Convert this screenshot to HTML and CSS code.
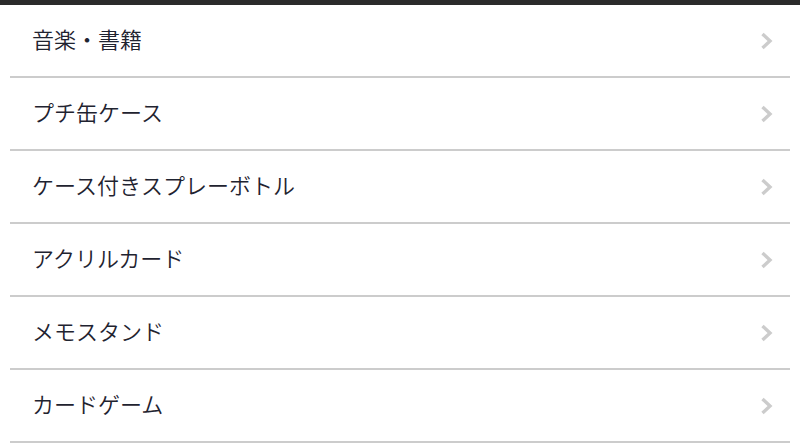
FILE: index.html
```html
<!DOCTYPE html>
<html lang="ja">
<head>
<meta charset="utf-8">
<link rel="stylesheet" href="styles.css">
</head>
<body>
<div class="topbar"></div>
<ul class="list">
  <li class="item"><span class="label">音楽・書籍</span><span class="chev"><svg width="16" height="20" viewBox="0 0 16 20"><path d="M3.5 3 L11 10 L3.5 17" fill="none" stroke="#cccccc" stroke-width="3.4"/></svg></span></li>
  <li class="item"><span class="label">プチ缶ケース</span><span class="chev"><svg width="16" height="20" viewBox="0 0 16 20"><path d="M3.5 3 L11 10 L3.5 17" fill="none" stroke="#cccccc" stroke-width="3.4"/></svg></span></li>
  <li class="item"><span class="label">ケース付きスプレーボトル</span><span class="chev"><svg width="16" height="20" viewBox="0 0 16 20"><path d="M3.5 3 L11 10 L3.5 17" fill="none" stroke="#cccccc" stroke-width="3.4"/></svg></span></li>
  <li class="item"><span class="label">アクリルカード</span><span class="chev"><svg width="16" height="20" viewBox="0 0 16 20"><path d="M3.5 3 L11 10 L3.5 17" fill="none" stroke="#cccccc" stroke-width="3.4"/></svg></span></li>
  <li class="item"><span class="label">メモスタンド</span><span class="chev"><svg width="16" height="20" viewBox="0 0 16 20"><path d="M3.5 3 L11 10 L3.5 17" fill="none" stroke="#cccccc" stroke-width="3.4"/></svg></span></li>
  <li class="item"><span class="label">カードゲーム</span><span class="chev"><svg width="16" height="20" viewBox="0 0 16 20"><path d="M3.5 3 L11 10 L3.5 17" fill="none" stroke="#cccccc" stroke-width="3.4"/></svg></span></li>
</ul>
</body>
</html>
```
FILE: styles.css
```css
html, body {
  margin: 0;
  padding: 0;
  background: #ffffff;
}
body {
  font-family: "Noto Sans CJK JP", "Noto Sans", sans-serif;
  color: #1f2330;
}
.topbar {
  height: 5px;
  background: #2b2b2b;
}
.list {
  list-style: none;
  margin: 0;
  padding: 0 10px;
}
.item {
  height: 71px;
  border-bottom: 2px solid #cccccc;
  display: flex;
  align-items: center;
  justify-content: space-between;
  padding: 0 15px 0 22px;
}
.label {
  font-size: 22px;
  line-height: 30px;
  font-weight: 350;
  margin-bottom: 6px;
}
.chev {
  display: flex;
  align-items: center;
}
.chev svg {
  display: block;
}
```
